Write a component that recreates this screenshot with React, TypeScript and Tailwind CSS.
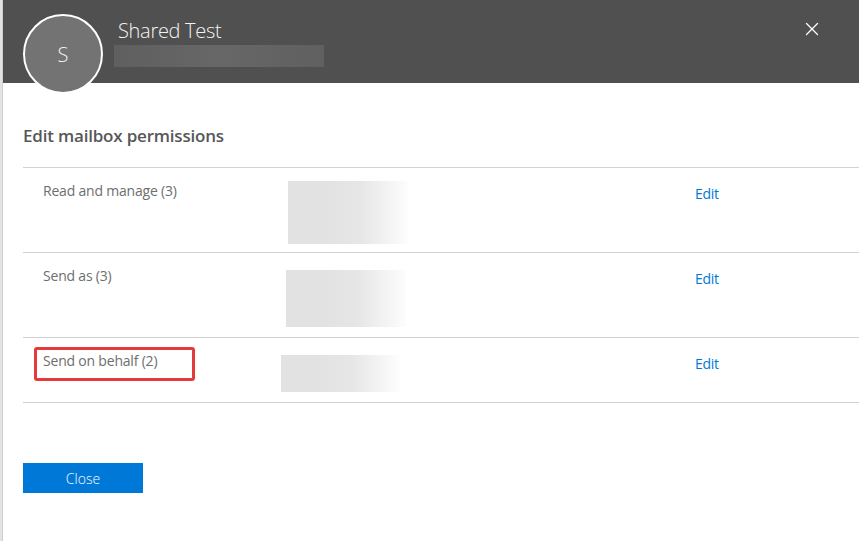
import { X } from "lucide-react";

// Permission rows of the panel
const rows = [
  { label: "Read and manage (3)", h: "h-[85px]", box: "ml-[5px] mt-[13px] w-[120px] h-[63px]", marked: false },
  { label: "Send as (3)", h: "h-[85px]", box: "ml-[3px] mt-[17px] w-[120px] h-[57px]", marked: false },
  { label: "Send on behalf (2)", h: "h-[65px]", box: "ml-[-2px] mt-[17px] w-[118px] h-[37px]", marked: true },
];

export default function App() {
  return (
    <div className="flex w-[859px] h-[541px] overflow-hidden bg-white" style={{ fontFamily: '"Open Sans", "Noto Sans", sans-serif' }}>
      <div className="w-[3px] shrink-0 bg-[#e3e3e3] border-r border-[#cfcfcf]" />

      <div className="flex-1 flex flex-col">
        {/* Header */}
        <div className="h-[83px] shrink-0 bg-[#505050] flex items-start">
          <div className="relative z-10 ml-[20px] mt-[14px] w-[80px] h-[80px] shrink-0 rounded-full border-2 border-white bg-[#737373] flex items-center justify-center">
            <span className="text-[20px] font-light text-[#f2f2f2] mt-[2px]">S</span>
          </div>
          <div className="ml-[15px] mt-[17px] flex flex-col">
            <span className="text-[20px] leading-[28px] font-light text-[#f4f4f4] tracking-[-0.3px]">Shared Test</span>
            <div className="mt-[0px] ml-[-4px] w-[210px] h-[22px] bg-gradient-to-r from-[#5f5f5f] via-[#676767] to-[#606060]" />
          </div>
          <button className="ml-auto mr-[36px] mt-[18px] text-white">
            <X size={22} strokeWidth={1.4} />
          </button>
        </div>

        {/* Body */}
        <div className="pl-[20px] flex flex-col">
          <h2 className="mt-[41px] text-[17px] leading-[24px] font-semibold text-[#575757] tracking-[-0.2px]">Edit mailbox permissions</h2>

          <div className="mt-[19px] border-t border-[#d2d2d2]">
            {rows.map((r) => (
              <div key={r.label} className={`${r.h} grid grid-cols-[260px_412px_1fr] border-b border-[#d2d2d2]`}>
                <div className="pl-[20px] pt-[10px]">
                  <span className="relative inline-block text-[14px] leading-[20px] text-[#6e6e6e] tracking-[-0.2px]">
                    {r.label}
                    {r.marked && (
                      <span className="absolute left-[-9px] top-[-4px] right-[-38px] bottom-[-10px] border-[3px] border-[#e53a3a] rounded-[3px]" />
                    )}
                  </span>
                </div>
                <div>
                  <div className={`${r.box} bg-gradient-to-r from-[#e2e2e2] from-30% via-[#e6e6e6] via-60% to-[#fdfdfd]`} />
                </div>
                <div className="pt-[13px]">
                  <a className="text-[14px] leading-[20px] text-[#0078d7] cursor-pointer tracking-[-0.3px]">Edit</a>
                </div>
              </div>
            ))}
          </div>

          <button className="mt-[60px] w-[120px] h-[30px] bg-[#0078d7] text-white text-[14px] font-light">Close</button>
        </div>
      </div>
    </div>
  );
}
